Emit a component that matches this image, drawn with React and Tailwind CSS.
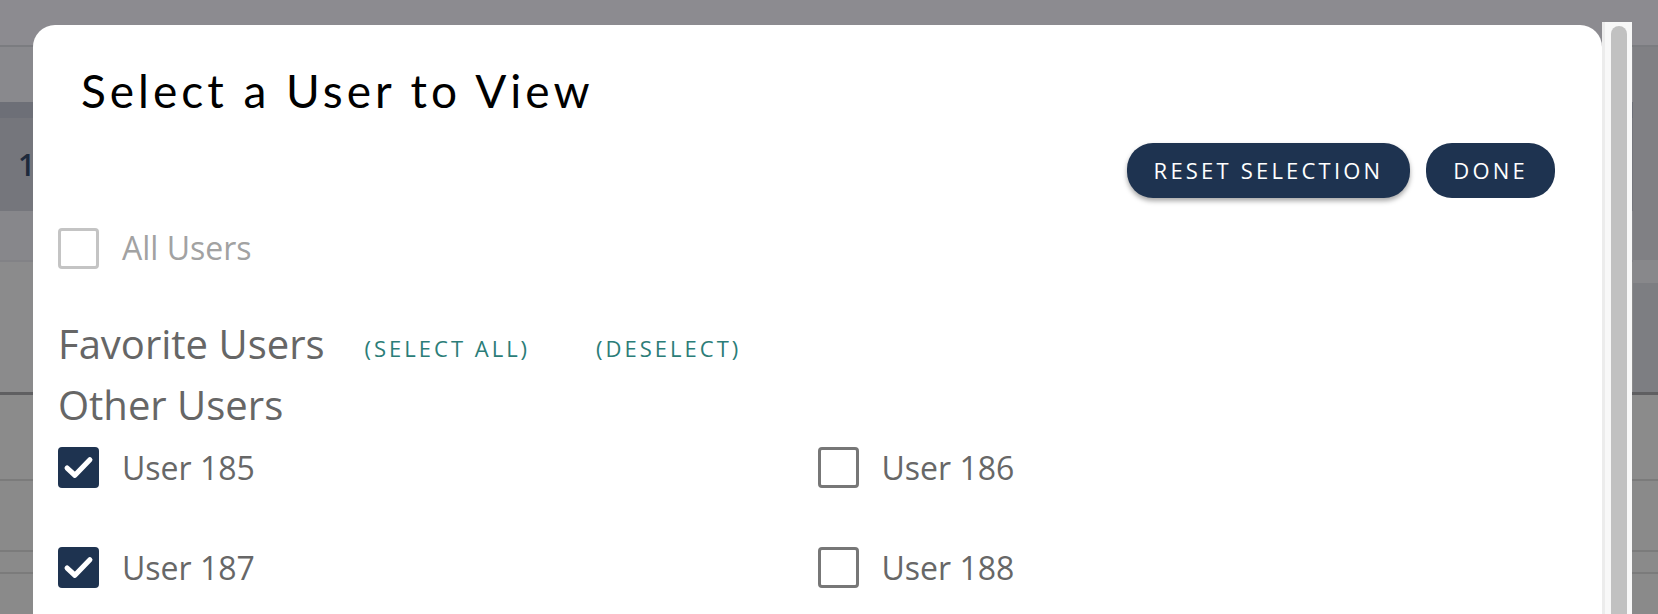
import React, { useState } from "react";

const users = [
  { id: 185, checked: true },
  { id: 186, checked: false },
  { id: 187, checked: true },
  { id: 188, checked: false },
];

function Box({ checked, light }) {
  if (checked) {
    return (
      <span className="flex h-[41px] w-[41px] shrink-0 items-center justify-center rounded-[4px] bg-[#1e3350]">
        <svg width="31" height="25" viewBox="0 0 30 24" fill="none">
          <path
            d="M4 12.5 L11.5 19.5 L26 4.5"
            stroke="white"
            strokeWidth="5"
            strokeLinecap="round"
            strokeLinejoin="round"
          />
        </svg>
      </span>
    );
  }
  return (
    <span
      className={
        light
          ? "block h-[41px] w-[41px] shrink-0 rounded-[4px] border-[3px] border-[#c4c4c4]"
          : "block h-[41px] w-[41px] shrink-0 rounded-[4px] border-[3px] border-[#777777]"
      }
    />
  );
}

function UserRow({ user, onToggle }) {
  return (
    <button
      type="button"
      onClick={onToggle}
      className="flex h-[100px] items-start gap-[23px] text-left"
    >
      <Box checked={user.checked} />
      <span className="text-[32px] leading-[41px] text-[#676767]">
        User {user.id}
      </span>
    </button>
  );
}

function Background() {
  return (
    <div className="flex h-[614px] w-full">
      <div className="flex flex-1 flex-col bg-[#8a8a8a]">
        <div className="h-[45px] bg-[#8c8b90]" />
        <div className="h-[2px] bg-[#7b7c80]" />
        <div className="h-[55px] bg-[#89898d]" />
        <div className="h-[16px] bg-[#6d6f77]" />
        <div className="flex h-[93px] items-center bg-[#75767c] pl-[18px] text-[30px] font-semibold text-[#1e2a3c]">
          1
        </div>
        <div className="h-[49px] bg-[#87878b]" />
        <div className="h-[2px] bg-[#828286]" />
        <div className="h-[130px] bg-[#8b8b8c]" />
        <div className="h-[3px] bg-[#5f5f61]" />
        <div className="h-[84px] bg-[#8b8b8b]" />
        <div className="h-[2px] bg-[#7b7b7b]" />
        <div className="h-[69px] bg-[#8a8a8a]" />
        <div className="h-[2px] bg-[#7b7b7b]" />
        <div className="h-[20px] bg-[#8a8a8a]" />
        <div className="h-[2px] bg-[#7b7b7b]" />
        <div className="flex-1 bg-[#8a8a8a]" />
      </div>
      <div className="flex w-[25px] flex-col bg-[#8a8a8a]">
        <div className="h-[45px] bg-[#8c8b90]" />
        <div className="h-[2px] bg-[#7b7c80]" />
        <div className="h-[213px] bg-[#808084]" />
        <div className="h-[23px] bg-[#88888b]" />
        <div className="h-[109px] bg-[#7d7e82]" />
        <div className="h-[3px] bg-[#5f5f61]" />
        <div className="h-[84px] bg-[#8b8b8b]" />
        <div className="h-[2px] bg-[#7b7b7b]" />
        <div className="h-[69px] bg-[#8a8a8a]" />
        <div className="h-[2px] bg-[#7b7b7b]" />
        <div className="h-[20px] bg-[#8a8a8a]" />
        <div className="h-[2px] bg-[#7b7b7b]" />
        <div className="flex-1 bg-[#8a8a8a]" />
      </div>
    </div>
  );
}

export default function App() {
  const [list, setList] = useState(users);

  const toggle = (id) => {
    setList(list.map((u) => (u.id === id ? { ...u, checked: !u.checked } : u)));
  };

  return (
    <div
      className="relative h-[614px] w-[1658px] overflow-hidden"
      style={{ fontFamily: "'Open Sans', 'Noto Sans', sans-serif" }}
    >
      <Background />

      {/* modal + its scrollbar */}
      <div className="absolute left-[33px] top-[22px] flex h-[600px]">
        <div className="mt-[3px] flex w-[1569px] flex-col rounded-t-[22px] bg-white px-[25px]">
          <h1
            className="pl-[23px] pt-[38px] text-[46px] leading-[1.2] tracking-[4px] text-black"
            style={{ fontFamily: "Lato, 'Open Sans', sans-serif" }}
          >
            Select a User to View
          </h1>
          <div className="mt-[25px] flex justify-end gap-[16px] pr-[22px]">
            <button className="h-[55px] rounded-[26px] bg-[#1e3350] px-[27px] text-[22px] tracking-[3.2px] text-white shadow-[0_3px_5px_rgba(0,0,0,0.35)]">
              RESET SELECTION
            </button>
            <button className="h-[55px] rounded-[26px] bg-[#1e3350] px-[27px] text-[22px] tracking-[3.2px] text-white">
              DONE
            </button>
          </div>

          <div className="mt-[26px] flex items-center gap-[23px]">
            <Box light />
            <span className="text-[32px] text-[#a2a2a2]">All Users</span>
          </div>

          <div className="mt-[41px] flex items-baseline">
            <span className="text-[40px] leading-[61px] text-[#666666]">
              Favorite Users
            </span>
            <button className="ml-[40px] -translate-y-[2px] text-[22px] tracking-[3px] text-[#2b7d78]">
              (SELECT ALL)
            </button>
            <button className="ml-[66px] -translate-y-[2px] text-[22px] tracking-[3px] text-[#2b7d78]">
              (DESELECT)
            </button>
          </div>
          <div className="text-[40px] leading-[61px] text-[#666666]">
            Other Users
          </div>

          <div className="mt-[12px] grid grid-cols-2">
            {list.map((u) => (
              <UserRow key={u.id} user={u} onToggle={() => toggle(u.id)} />
            ))}
          </div>
        </div>

        <div className="flex w-[30px] justify-center border-l-[3px] border-[#ececec] bg-[#f8f8f8] pt-[4px]">
          <div className="h-full w-[16px] rounded-t-[8px] bg-[#c1c1c1]" />
        </div>
      </div>
    </div>
  );
}
